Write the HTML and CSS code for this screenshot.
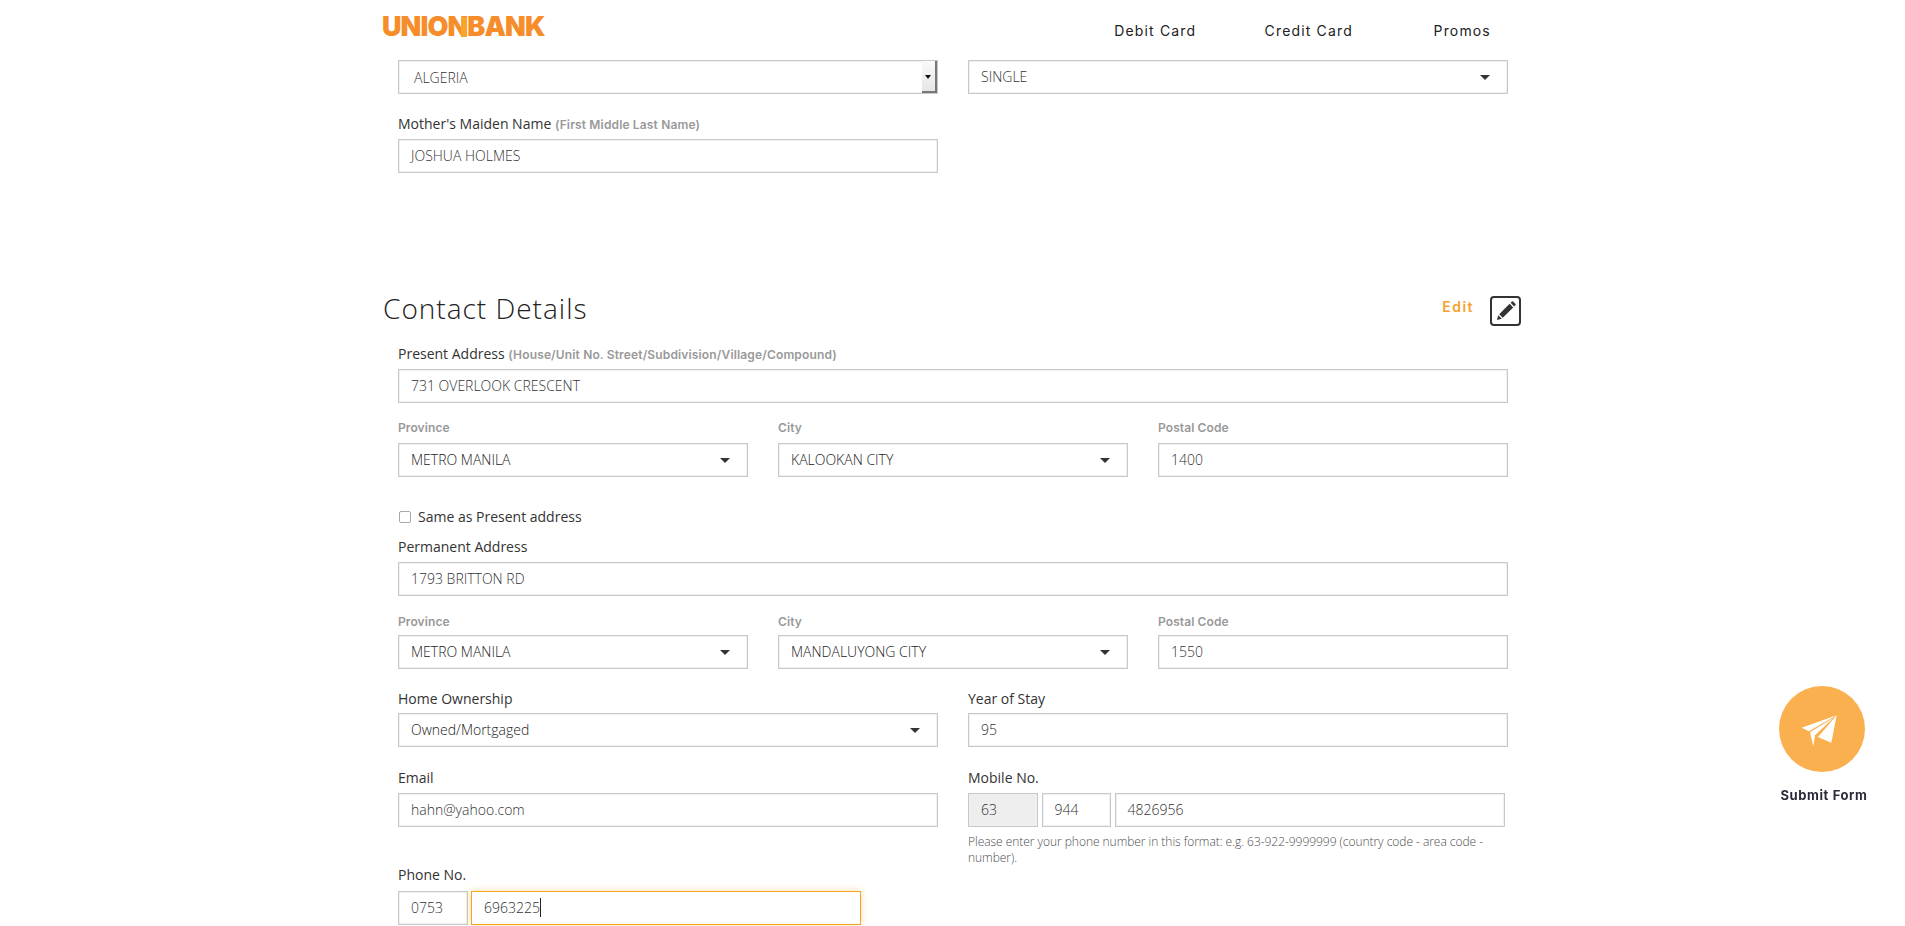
FILE: index.html
```html
<!DOCTYPE html>
<html lang="en">
<head>
<meta charset="utf-8">
<title>UnionBank Application</title>
<link rel="stylesheet" href="styles.css">
</head>
<body>
<header class="topbar">
  <div class="logo">UNIO<span class="logo-n">N</span>BANK</div>
  <nav class="nav">
    <a class="nav-item">Debit Card</a>
    <a class="nav-item">Credit Card</a>
    <a class="nav-item">Promos</a>
  </nav>
</header>

<main class="page">
  <div class="form">
    <div class="row two">
      <div class="control native"><span class="native-text">ALGERIA</span><span class="spin"></span></div>
      <div class="control select"><span>SINGLE</span><i class="caret"></i></div>
    </div>
    <div class="row two mt20">
      <div>
        <div class="label mb5">Mother's Maiden Name <span class="hint">(First Middle Last Name)</span></div>
        <div class="control">JOSHUA HOLMES</div>
      </div>
    </div>
  </div>

  <div class="section-head">
    <h2 class="section-title">Contact Details</h2>
    <div class="edit"><span class="edit-text">Edit</span>
      <span class="edit-btn">
        <svg class="edit-icon" viewBox="0 0 24 24"><path d="M3 21l1.2-4.8 3.6 3.6z"/><path d="M5.2 15.2L15.6 4.8l3.6 3.6L8.8 18.8z"/><path d="M16.6 3.8l1.3-1.3a.9.9 0 0 1 1.2 0l2.4 2.4a.9.9 0 0 1 0 1.2l-1.3 1.3z"/></svg>
      </span>
    </div>
  </div>

  <div class="form">
    <div class="label mb5">Present Address <span class="hint">(House/Unit No. Street/Subdivision/Village/Compound)</span></div>
    <div class="control">731 OVERLOOK CRESCENT</div>

    <div class="row three mt17">
      <div><div class="sublabel mb7">Province</div><div class="control select dark"><span>METRO MANILA</span><i class="caret"></i></div></div>
      <div><div class="sublabel mb7">City</div><div class="control select dark"><span>KALOOKAN CITY</span><i class="caret"></i></div></div>
      <div><div class="sublabel mb7">Postal Code</div><div class="control">1400</div></div>
    </div>

    <label class="check-row"><input class="check" type="checkbox"><span>Same as Present address</span></label>

    <div class="label mt11 mb5">Permanent Address</div>
    <div class="control">1793 BRITTON RD</div>

    <div class="row three mt18">
      <div><div class="sublabel mb5">Province</div><div class="control select dark"><span>METRO MANILA</span><i class="caret"></i></div></div>
      <div><div class="sublabel mb5">City</div><div class="control select dark"><span>MANDALUYONG CITY</span><i class="caret"></i></div></div>
      <div><div class="sublabel mb5">Postal Code</div><div class="control">1550</div></div>
    </div>

    <div class="row two mt20">
      <div><div class="label mb4">Home Ownership</div><div class="control select dark"><span>Owned/Mortgaged</span><i class="caret"></i></div></div>
      <div><div class="label mb4">Year of Stay</div><div class="control">95</div></div>
    </div>

    <div class="row two mt21">
      <div><div class="label mb5">Email</div><div class="control">hahn@yahoo.com</div></div>
      <div>
        <div class="label mb5">Mobile No.</div>
        <div class="phone mobile">
          <div class="control disabled">63</div>
          <div class="control">944</div>
          <div class="control">4826956</div>
        </div>
        <p class="help">Please enter your phone number in this format: e.g. 63-922-9999999 (country code - area code - number).</p>
      </div>
    </div>

    <div class="label mb6">Phone No.</div>
    <div class="phone landline">
      <div class="control">0753</div>
      <div class="control focused">6963225<i class="text-caret"></i></div>
    </div>
  </div>
</main>

<aside class="submit">
  <div class="submit-circle">
    <svg class="plane" viewBox="0 0 258 258">
      <polygon points="68,125 173,88 90,136"/>
      <polygon points="173,88 157,170 117,153"/>
      <polygon points="93,139 163,96 108,148 103,181"/>
    </svg>
  </div>
  <div class="submit-text">Submit Form</div>
</aside>
</body>
</html>
```

FILE: styles.css
```css
* { box-sizing: border-box; }

html, body {
  margin: 0;
  height: 926px;
  overflow: hidden;
  background: #fff;
}

body {
  font-family: "Open Sans", "Liberation Sans", sans-serif;
  font-size: 14px;
  color: #333;
}

.topbar {
  display: flex;
  justify-content: space-between;
  height: 60px;
  padding-left: 382px;
  padding-right: 366px;
}

.logo {
  margin-top: 10px;
  height: 34px;
  line-height: 34px;
  font-family: "Inter", "Liberation Sans", sans-serif;
  font-size: 27px;
  font-weight: 900;
  letter-spacing: -0.9px;
  color: #f78d2a;
}

.logo-n {
  position: relative;
}

.logo-n::after {
  content: "";
  position: absolute;
  right: 0;
  top: 7px;
  width: 6px;
  height: 20px;
  background: #f9a42a;
}

.nav {
  display: flex;
  padding-top: 21px;
}

.nav-item {
  width: 153.5px;
  height: 20px;
  line-height: 20px;
  text-align: center;
  font-family: "Inter", "Liberation Sans", sans-serif;
  font-size: 14px;
  letter-spacing: 1.15px;
  color: #222;
}

.page {
  padding-left: 383px;
  padding-right: 397px;
}

.form {
  padding-left: 15px;
}

.row { display: grid; }
.two { grid-template-columns: 540px 540px; column-gap: 30px; }
.three { grid-template-columns: 350px 350px 350px; column-gap: 30px; }

.mt11 { margin-top: 11px; }
.mt17 { margin-top: 17px; }
.mt18 { margin-top: 18px; }
.mt20 { margin-top: 20px; }
.mt21 { margin-top: 21px; }
.mb4 { margin-bottom: 4px; }
.mb5 { margin-bottom: 5px; }
.mb6 { margin-bottom: 6px; }
.mb7 { margin-bottom: 7px; }

.label {
  height: 20px;
  line-height: 20px;
  color: #333;
}

.hint {
  font-family: "Inter", "Liberation Sans", sans-serif;
  font-size: 12px;
  font-weight: 600;
  letter-spacing: 0.15px;
  color: #999;
}

.sublabel {
  height: 16px;
  line-height: 16px;
  font-family: "Inter", "Liberation Sans", sans-serif;
  font-size: 12px;
  font-weight: 600;
  letter-spacing: 0.1px;
  color: #999;
}

.control {
  display: flex;
  align-items: center;
  height: 34px;
  padding: 0 12px 2px;
  border: 1px solid #c8c8c8;
  box-shadow: inset 0 0 0 1px #f0f0f0;
  background: #fff;
  font-weight: 300;
  color: #333;
}

.select { justify-content: space-between; padding-right: 17px; }
.select.dark { color: #222; }

.caret {
  width: 0;
  height: 0;
  margin-top: 2px;
  border-left: 5.5px solid transparent;
  border-right: 5.5px solid transparent;
  border-top: 5.5px solid #333;
}

.native {
  justify-content: space-between;
  padding: 0;
}

.native-text { margin-left: 15px; }

.spin {
  position: relative;
  width: 15px;
  height: 32px;
  background: linear-gradient(#fafafa, #e6e6e6);
  border-right: 2px solid #777;
  border-bottom: 2px solid #777;
}

.spin::after {
  content: "";
  position: absolute;
  left: 3px;
  top: 14px;
  border-left: 3.5px solid transparent;
  border-right: 3.5px solid transparent;
  border-top: 4px solid #111;
}

.section-head {
  display: flex;
  justify-content: space-between;
  align-items: center;
  height: 30px;
  margin-top: 123px;
  margin-bottom: 18px;
  margin-right: -13px;
}

.section-title {
  margin: -7px 0 0;
  font-size: 28px;
  font-weight: 300;
  letter-spacing: 1px;
  color: #222;
}

.edit {
  display: flex;
  align-items: center;
  gap: 16px;
}

.edit-text {
  font-family: "Inter", "Liberation Sans", sans-serif;
  font-size: 14px;
  font-weight: 600;
  letter-spacing: 1.5px;
  color: #f9a12f;
  margin-top: -9px;
}

.edit-btn {
  display: flex;
  align-items: center;
  justify-content: center;
  width: 31px;
  height: 30px;
  border: 2px solid #333;
  border-radius: 4px;
}

.edit-icon {
  width: 24px;
  height: 24px;
  fill: #333;
}

.check-row {
  display: flex;
  align-items: center;
  height: 20px;
  margin-top: 29px;
}

.check {
  appearance: none;
  width: 12px;
  height: 12px;
  margin: 1px 7px 0 1px;
  border: 1px solid #a8a8a8;
  border-radius: 2px;
  background: #fff;
}

.phone {
  display: grid;
}

.mobile { grid-template-columns: 70px 69.5px 390.5px; column-gap: 3.5px; }
.landline { grid-template-columns: 70px 390px; column-gap: 3px; }

.disabled { background: #eee; }

.focused {
  border-color: #f5a623;
  box-shadow: 0 0 7px rgba(245, 166, 35, 0.4);
}

.text-caret {
  display: inline-block;
  width: 1px;
  height: 19px;
  background: #222;
}

.help {
  margin: 7px 0 0;
  font-size: 12px;
  font-weight: 300;
  letter-spacing: -0.04px;
  line-height: 15.5px;
  color: #4d4d4d;
}

.submit {
  position: fixed;
  left: 1772px;
  top: 686px;
  width: 100px;
  text-align: center;
}

.submit-circle {
  width: 86px;
  height: 86px;
  margin: 0 auto;
  border-radius: 50%;
  background: #fbb04f;
}

.plane {
  display: block;
  width: 86px;
  height: 86px;
  fill: #fff;
}

.submit-text {
  margin-top: 15px;
  padding-left: 4px;
  white-space: nowrap;
  font-family: "Inter", "Liberation Sans", sans-serif;
  font-size: 13px;
  font-weight: 700;
  letter-spacing: 0.6px;
  color: #2a2a3a;
}
```
